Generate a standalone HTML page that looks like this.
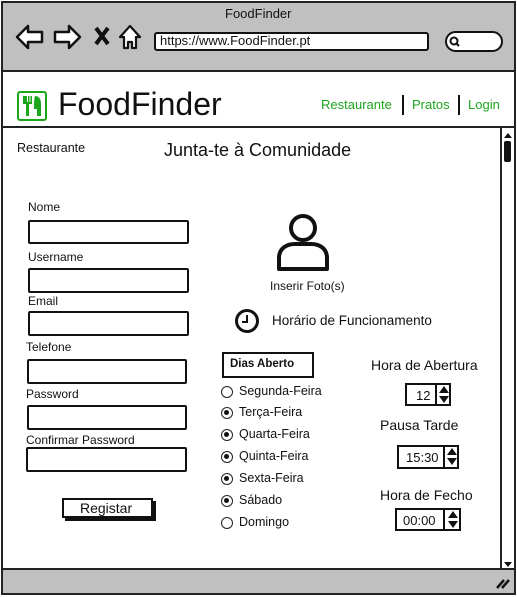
<!DOCTYPE html>
<html><head><meta charset="utf-8"><style>
*{margin:0;padding:0;box-sizing:border-box}
body{width:517px;height:597px;background:#fff;position:relative;overflow:hidden;font-family:"Liberation Sans",sans-serif;color:#111}
.a{position:absolute}
.lbl{position:absolute;font-size:12px;white-space:nowrap}
.in{position:absolute;border:2px solid #111;border-radius:2px;background:#fff}
.t{position:absolute;font-size:13px;white-space:nowrap}
.rad{position:absolute;width:12px;height:12px;border:1.5px solid #222;border-radius:50%}
.rad.on::after{content:"";position:absolute;left:2px;top:2px;width:5px;height:5px;border-radius:50%;background:#111}
.spin{position:absolute;border:2px solid #111;background:#fff;font-size:13px}
</style></head><body>
<div class="a" style="left:1px;top:1px;width:515px;height:594px;border:2px solid #222;background:#fff"></div>
<div class="a" style="left:3px;top:3px;width:511px;height:69px;background:#c0c0c0;border-bottom:2px solid #222"></div>
<div class="t" style="left:225px;top:6px;font-size:13px">FoodFinder</div>
<svg class="a" style="left:14px;top:22px" width="130" height="30" viewBox="0 0 130 30">
<path d="M3 15 L14 4 L14 10 L28 10 L28 20 L14 20 L14 26 Z" fill="#fff" stroke="#111" stroke-width="2.5" stroke-linejoin="round"/>
<path d="M66 15 L55 4 L55 10 L41 10 L41 20 L55 20 L55 26 Z" fill="#fff" stroke="#111" stroke-width="2.5" stroke-linejoin="round"/>
<path d="M82 6 L94 22 M94 6 L82 22" stroke="#111" stroke-width="4"/>
<path d="M106 15 L116 4 L126 15 L122 15 L122 26 L118 26 L118 20 L114 20 L114 26 L110 26 L110 15 Z" fill="#fff" stroke="#111" stroke-width="2.2" stroke-linejoin="round"/>
</svg>
<div class="a" style="left:154px;top:32px;width:275px;height:19px;border:2px solid #111;border-radius:3px;background:#fff"></div>
<div class="t" style="left:160px;top:33px;font-size:13px">https://www.FoodFinder.pt</div>
<div class="a" style="left:445px;top:31px;width:58px;height:21px;border:2px solid #111;border-radius:11px;background:#fff"></div>
<svg class="a" style="left:448px;top:35px" width="14" height="14"><circle cx="6" cy="6" r="3.5" stroke="#111" stroke-width="2" fill="none"/><path d="M8.5 8.5 L11 11" stroke="#111" stroke-width="2"/></svg>
<div class="a" style="left:3px;top:126px;width:511px;height:2px;background:#222"></div>
<div class="a" style="left:17px;top:91px;width:30px;height:30px;border:2px solid #1da51d;border-radius:3px"></div>
<svg class="a" style="left:21px;top:94px" width="22" height="24"><path d="M2 2v8h3v12h3V10h3V2h-1.5v6h-1V2h-1.5v6h-1V2zM14 2c4 0 6 3 6 8v12h-4v-7h-3c0-6 0-10 1-13z" fill="#1da51d"/></svg>
<div class="t" style="left:58px;top:86px;font-size:32px">FoodFinder</div>
<div class="t" style="left:321px;top:97px;color:#1da51d;font-size:13px">Restaurante</div>
<div class="a" style="left:402px;top:95px;width:2px;height:20px;background:#111"></div>
<div class="t" style="left:412px;top:97px;color:#1da51d;font-size:13px">Pratos</div>
<div class="a" style="left:458px;top:95px;width:2px;height:20px;background:#111"></div>
<div class="t" style="left:468px;top:97px;color:#1da51d;font-size:13px">Login</div>
<div class="a" style="left:500px;top:128px;width:2px;height:441px;background:#222"></div>
<svg class="a" style="left:503px;top:131px" width="10" height="8"><path d="M1 7 L5 2 L9 7Z" fill="#111"/></svg>
<div class="a" style="left:504px;top:141px;width:7px;height:21px;background:#111;border-radius:2px"></div>
<svg class="a" style="left:503px;top:561px" width="10" height="8"><path d="M1 1 L5 6 L9 1Z" fill="#111"/></svg>
<div class="a" style="left:3px;top:568px;width:511px;height:25px;background:#c0c0c0;border-top:2px solid #222"></div>
<svg class="a" style="left:495px;top:576px" width="16" height="14"><path d="M2 12 L9 4 M7 12 L14 4" stroke="#111" stroke-width="2.5"/></svg>
<div class="t" style="left:17px;top:141px;font-size:12.5px">Restaurante</div>
<div class="t" style="left:164px;top:140px;font-size:18px">Junta-te à Comunidade</div>
<div class="lbl" style="left:28px;top:200px">Nome</div>
<div class="in" style="left:28px;top:220px;width:161px;height:24px"></div>
<div class="lbl" style="left:28px;top:250px">Username</div>
<div class="in" style="left:28px;top:268px;width:161px;height:25px"></div>
<div class="lbl" style="left:28px;top:294px">Email</div>
<div class="in" style="left:28px;top:311px;width:161px;height:25px"></div>
<div class="lbl" style="left:26px;top:340px">Telefone</div>
<div class="in" style="left:27px;top:359px;width:160px;height:25px"></div>
<div class="lbl" style="left:26px;top:387px">Password</div>
<div class="in" style="left:27px;top:405px;width:160px;height:25px"></div>
<div class="lbl" style="left:26px;top:433px">Confirmar Password</div>
<div class="in" style="left:26px;top:447px;width:161px;height:25px"></div>
<div class="a" style="left:62px;top:498px;width:91px;height:20px;border:2px solid #111;background:#fff;box-shadow:3px 3px 0 #111"></div>
<div class="t" style="left:80px;top:500px;font-size:14px">Registar</div>
<svg class="a" style="left:274px;top:210px" width="60" height="64"><circle cx="29" cy="18" r="12" stroke="#111" stroke-width="4" fill="none"/><path d="M5 59 V48 C5 38 13 34 21 34 H37 C45 34 53 38 53 48 V59 Z" stroke="#111" stroke-width="4" fill="none" stroke-linejoin="round"/></svg>
<div class="t" style="left:270px;top:279px;font-size:12px">Inserir Foto(s)</div>
<svg class="a" style="left:234px;top:308px" width="26" height="26"><circle cx="13" cy="13" r="10.5" stroke="#111" stroke-width="3" fill="none"/><path d="M13 7 V14 H8" stroke="#111" stroke-width="2" fill="none"/></svg>
<div class="t" style="left:272px;top:313px;font-size:13.5px">Horário de Funcionamento</div>
<div class="a" style="left:222px;top:352px;width:92px;height:26px;border:2px solid #111;background:#fff"></div>
<div class="t" style="left:230px;top:358px;font-size:11.5px;font-weight:bold">Dias Aberto</div>
<div class="rad" style="left:221px;top:386px"></div><div class="t" style="left:239px;top:384px;font-size:12.5px">Segunda-Feira</div>
<div class="rad on" style="left:221px;top:407px"></div><div class="t" style="left:239px;top:405px;font-size:12.5px">Terça-Feira</div>
<div class="rad on" style="left:221px;top:429px"></div><div class="t" style="left:239px;top:427px;font-size:12.5px">Quarta-Feira</div>
<div class="rad on" style="left:221px;top:451px"></div><div class="t" style="left:239px;top:449px;font-size:12.5px">Quinta-Feira</div>
<div class="rad on" style="left:221px;top:473px"></div><div class="t" style="left:239px;top:471px;font-size:12.5px">Sexta-Feira</div>
<div class="rad on" style="left:221px;top:495px"></div><div class="t" style="left:239px;top:493px;font-size:12.5px">Sábado</div>
<div class="rad" style="left:221px;top:517px"></div><div class="t" style="left:239px;top:515px;font-size:12.5px">Domingo</div>
<div class="t" style="left:371px;top:357px;font-size:14px">Hora de Abertura</div>
<div class="spin" style="left:405px;top:383px;width:46px;height:23px"><span style="position:absolute;left:9px;top:3px">12</span></div>
<div class="a" style="left:435px;top:383px;width:2px;height:23px;background:#111"></div>
<svg class="a" style="left:438px;top:385px" width="12" height="19"><path d="M1 8 L6 1 L11 8Z M1 11 L6 18 L11 11Z" fill="#111"/></svg>
<div class="t" style="left:380px;top:417px;font-size:14px">Pausa Tarde</div>
<div class="spin" style="left:397px;top:445px;width:62px;height:24px"><span style="position:absolute;left:7px;top:3px">15:30</span></div>
<div class="a" style="left:443px;top:445px;width:2px;height:24px;background:#111"></div>
<svg class="a" style="left:446px;top:447px" width="12" height="19"><path d="M1 8 L6 1 L11 8Z M1 11 L6 18 L11 11Z" fill="#111"/></svg>
<div class="t" style="left:380px;top:487px;font-size:14px">Hora de Fecho</div>
<div class="spin" style="left:395px;top:508px;width:66px;height:23px"><span style="position:absolute;left:6px;top:3px">00:00</span></div>
<div class="a" style="left:443px;top:508px;width:2px;height:23px;background:#111"></div>
<svg class="a" style="left:447px;top:510px" width="12" height="19"><path d="M1 8 L6 1 L11 8Z M1 11 L6 18 L11 11Z" fill="#111"/></svg>
</body></html>
